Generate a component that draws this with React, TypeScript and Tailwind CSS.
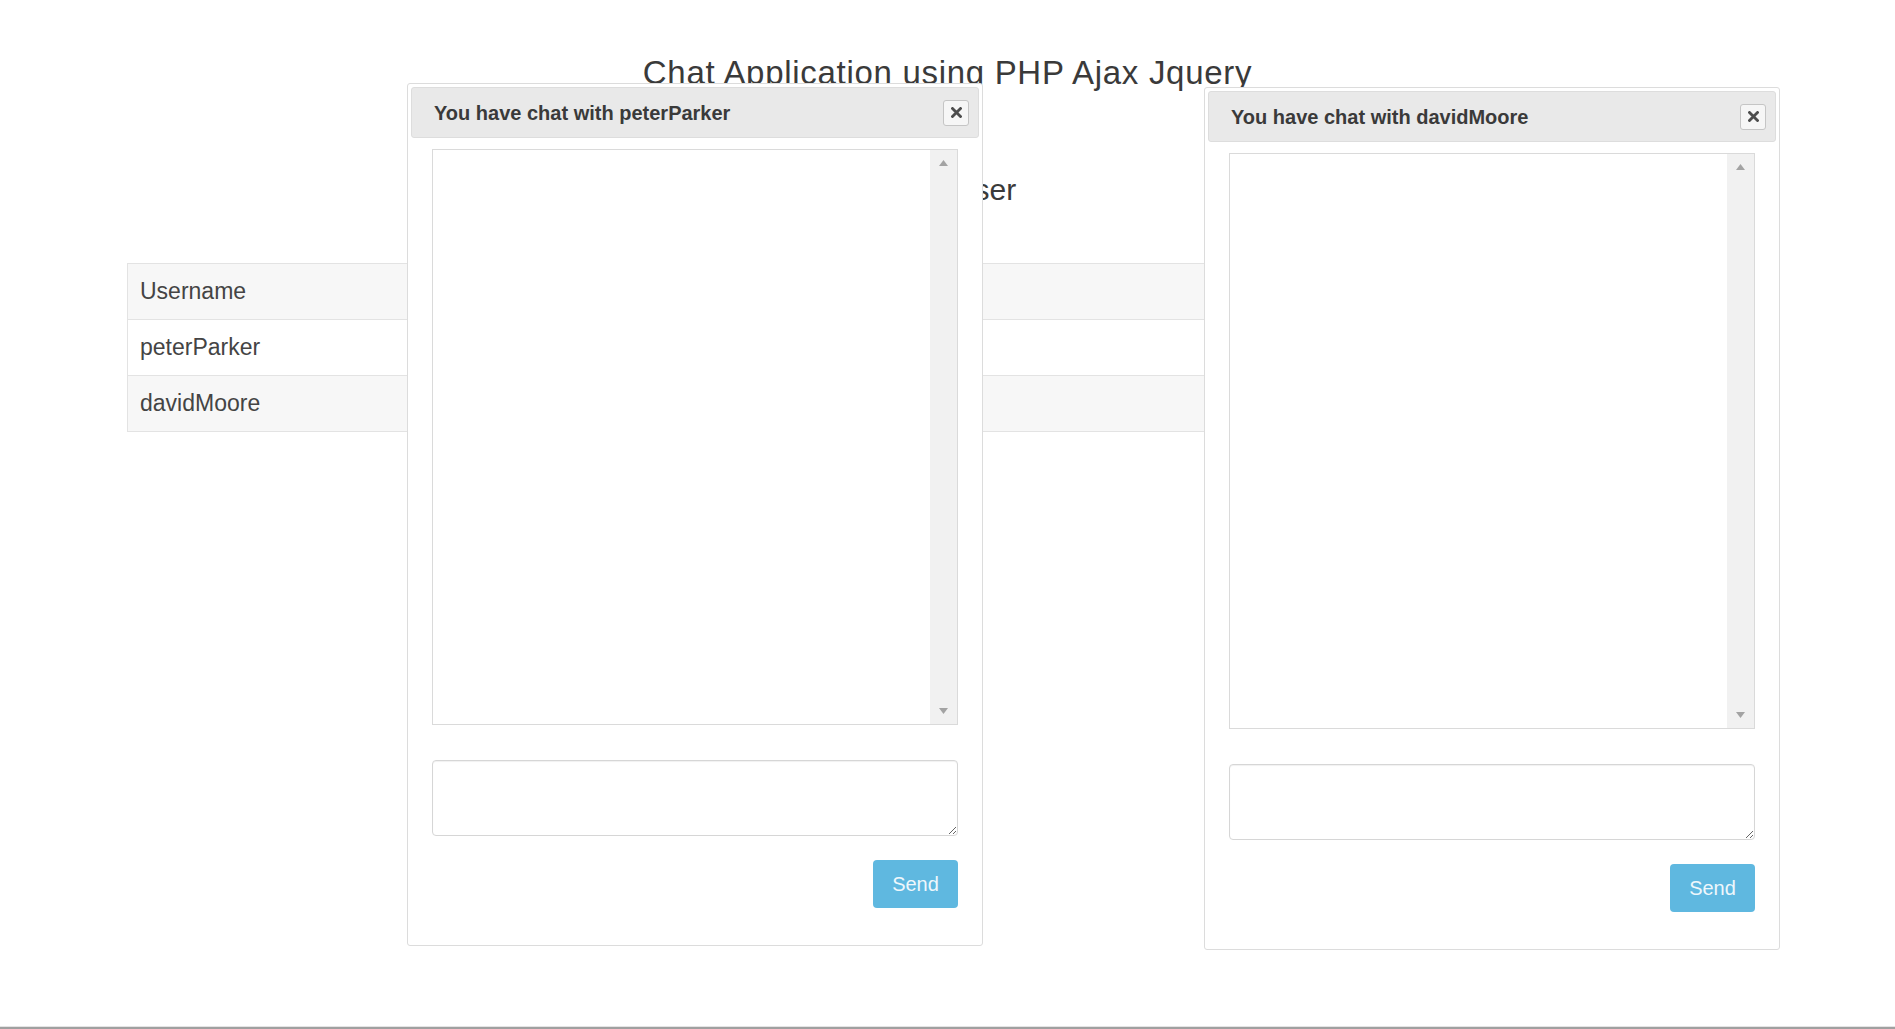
import React from 'react';

const users = ['peterParker', 'davidMoore'];

function CloseIcon() {
  return (
    <svg width="11" height="11" viewBox="0 0 11 11" aria-hidden="true">
      <path d="M1.5 1.5L9.5 9.5M9.5 1.5L1.5 9.5" stroke="#4d4d4d" strokeWidth="2.8" strokeLinecap="square" />
    </svg>
  );
}

function ChatDialog({ user, pos }: { user: string; pos: string }) {
  return (
    <div
      className={`absolute ${pos} w-[576px] h-[863px] bg-white border border-[#dcdcdc] rounded-[3px] p-[3px] flex flex-col`}
    >
      {/* Title bar */}
      <div className="h-[51px] bg-[#e9e9e9] border border-[#dddddd] rounded-[3px] flex items-center justify-between pl-[22px] pr-[9px]">
        <span className="text-[20px] font-bold text-[#3a3a3a]">You have chat with {user}</span>
        <button className="w-[26px] h-[26px] bg-[#f6f6f6] border border-[#c5c5c5] rounded-[3px] flex items-center justify-center">
          <CloseIcon />
        </button>
      </div>

      <div className="px-[21px] pt-[11px] flex flex-col">
        {/* Message history */}
        <div className="h-[576px] border border-[#dadada] flex">
          <div className="flex-1" />
          <div className="w-[27px] bg-[#f1f1f1] flex flex-col items-center justify-between py-[10px]">
            <svg width="9" height="6" viewBox="0 0 9 6">
              <polygon points="4.5,0 9,6 0,6" fill="#a3a3a3" />
            </svg>
            <svg width="9" height="6" viewBox="0 0 9 6">
              <polygon points="0,0 9,0 4.5,6" fill="#a3a3a3" />
            </svg>
          </div>
        </div>

        <textarea className="mt-[35px] h-[76px] w-full border border-[#d6d6d6] rounded-[4px] shadow-[inset_0_1px_1px_rgba(0,0,0,0.06)] outline-none" />

        <div className="mt-[24px] flex justify-end">
          <button className="w-[85px] h-[48px] rounded-[4px] bg-[#5fb8e0] text-[20px] text-[#eef7fc]">
            Send
          </button>
        </div>
      </div>
    </div>
  );
}

export default function App() {
  return (
    <div className="relative w-full h-[1029px] bg-white overflow-hidden flex flex-col font-['Liberation_Sans',Arial,sans-serif] text-[#444444]">
      <h3 className="pt-[54px] text-center text-[33px] leading-[38px] tracking-[0.7px] text-[#3a3a3a]">
        Chat Application using PHP Ajax Jquery
      </h3>
      <h4 className="mt-[81px] text-center pr-[21px] text-[30px] leading-[34px] text-[#3a3a3a]">Online User</h4>

      <div className="mt-[56px] mx-[127px] border-t border-x border-[#e3e3e3]">
        <div className="h-[56px] border-b border-[#e3e3e3] bg-[#f7f7f7] flex items-center pl-3 text-[23px]">
          Username
        </div>
        {users.map((u, i) => (
          <div
            key={u}
            className={`h-[56px] border-b border-[#e3e3e3] flex items-center pl-3 text-[23px] ${
              i % 2 === 1 ? 'bg-[#f7f7f7]' : 'bg-white'
            }`}
          >
            {u}
          </div>
        ))}
      </div>

      <div className="mt-auto">
        <div className="h-px bg-[#e4e4e4]" />
        <div className="h-[2px] bg-[#a0a0a0]" />
      </div>

      <ChatDialog user="peterParker" pos="left-[407px] top-[83px]" />
      <ChatDialog user="davidMoore" pos="left-[1204px] top-[87px]" />
    </div>
  );
}
